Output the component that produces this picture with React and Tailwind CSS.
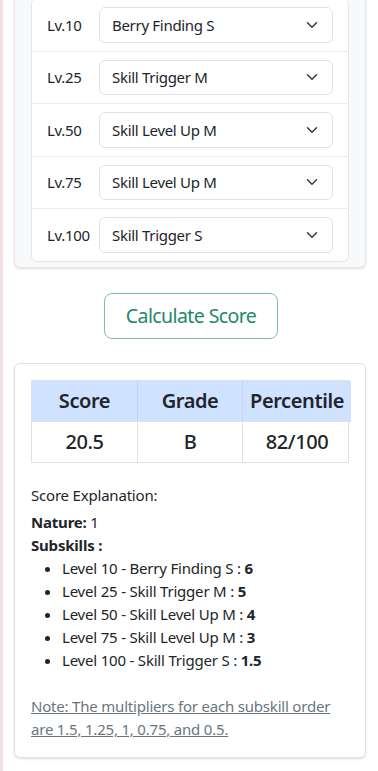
import React from "react";

const rows = [
  ["Lv.10", "Berry Finding S"],
  ["Lv.25", "Skill Trigger M"],
  ["Lv.50", "Skill Level Up M"],
  ["Lv.75", "Skill Level Up M"],
  ["Lv.100", "Skill Trigger S"],
];

const items = [
  ["Level 10 - Berry Finding S : ", "6"],
  ["Level 25 - Skill Trigger M : ", "5"],
  ["Level 50 - Skill Level Up M : ", "4"],
  ["Level 75 - Skill Level Up M : ", "3"],
  ["Level 100 - Skill Trigger S : ", "1.5"],
];

function Chevron() {
  return (
    <svg width="16" height="12" viewBox="0 0 16 16" fill="none">
      <path d="m2 5 6 6 6-6" stroke="#343a40" strokeWidth="2" strokeLinecap="round" strokeLinejoin="round" />
    </svg>
  );
}

export default function App() {
  return (
    <div className="min-h-[771px] overflow-hidden bg-white border-l-[3px] border-[#f1e1e1] font-['Noto_Sans',sans-serif] text-[#212529]">
      <div className="pl-[11px] w-[363px]">
        <div className="mt-[-19px] rounded-md border border-[#e4e7ea] bg-[#f8f9fa] shadow-sm px-4 pt-4 pb-[5px]">
          <div className="rounded-md border border-[#e4e7ea] bg-white">
            {rows.map(([lv, name], i) => (
              <div
                key={lv}
                className={
                  i < 4
                    ? "flex items-center py-2 pl-[15px] pr-[15px] border-b border-[#e9ecef]"
                    : "flex items-center py-2 pl-[15px] pr-[15px]"
                }
              >
                <div className="w-[52px] text-[15px] tracking-[-0.3px]">{lv}</div>
                <div className="flex h-[35.5px] flex-1 items-center justify-between rounded-md border border-[#dee2e6] pl-[12px] pr-3 text-[15px] tracking-[-0.3px]">
                  <span>{name}</span>
                  <Chevron />
                </div>
              </div>
            ))}
          </div>
        </div>

        <div className="mt-[25px] flex justify-center pl-[2px]">
          <button className="rounded-lg border border-[#7cc0a0] px-[21px] py-[7px] text-[19.5px] leading-[30px] tracking-[-0.6px] text-[#23886a]">
            Calculate Score
          </button>
        </div>

        <div className="mt-[24px] rounded-md border border-[#e0e3e6] bg-white p-4 shadow-sm">
          <div className="grid grid-cols-[106px_105px_108px] border border-[#dee2e6] text-[20px] tracking-[-0.4px]">
            <div className="flex h-[40.5px] items-center justify-center bg-[#cfe2ff] font-semibold border-r border-[#c3d5ef]">Score</div>
            <div className="flex h-[40.5px] items-center justify-center bg-[#cfe2ff] font-semibold border-r border-[#c3d5ef]">Grade</div>
            <div className="flex h-[40.5px] items-center justify-center bg-[#cfe2ff] font-semibold">Percentile</div>
            <div className="flex h-[40.5px] items-center justify-center font-medium border-r border-t border-[#dee2e6]">20.5</div>
            <div className="flex h-[40.5px] items-center justify-center font-medium border-r border-t border-[#dee2e6]">B</div>
            <div className="flex h-[40.5px] items-center justify-center font-medium border-t border-[#dee2e6]">82/100</div>
          </div>

          <div className="mt-[21px] text-[15px] leading-[23px] tracking-[-0.2px]">
            <div className="mb-[4px]">Score Explanation:</div>
            <div>
              <span className="font-bold">Nature:</span> 1
            </div>
            <div className="font-bold">Subskills :</div>
            <ul className="list-disc pl-[31px]">
              {items.map(([t, v]) => (
                <li key={t}>
                  {t}
                  <span className="font-bold">{v}</span>
                </li>
              ))}
            </ul>
            <div className="mt-[23px] text-[#6c757d] underline">
              Note: The multipliers for each subskill order
              <br />
              are 1.5, 1.25, 1, 0.75, and 0.5.
            </div>
          </div>
        </div>
      </div>
    </div>
  );
}
